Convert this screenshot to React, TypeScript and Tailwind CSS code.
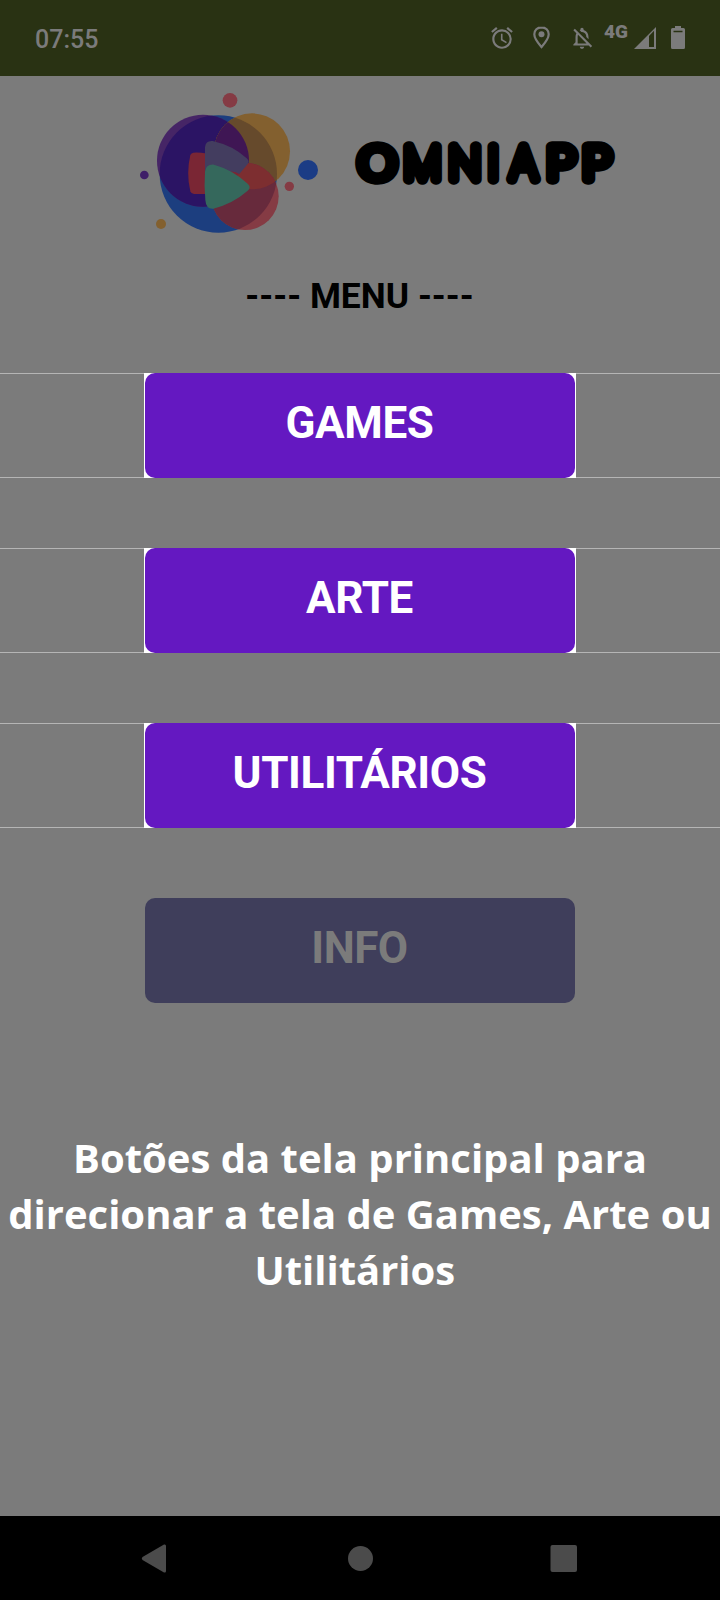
import { MdAccessAlarm, MdOutlineNotificationsOff } from "react-icons/md";

function StatusBar() {
  return (
    <header className="flex h-[76px] shrink-0 items-start bg-[#293213] pl-[35px] text-[#7b7b7b]">
      <span className="mt-[25px] text-[25px] leading-[30px] font-medium">07:55</span>
      <div className="ml-auto flex pr-[35px]">
        <MdAccessAlarm className="mt-[25px] size-[26px]" />
        <svg className="mt-[26px] ml-[18px] h-[23px] w-[17px]" viewBox="0 0 17 23">
          <path
            d="M8.500 1.300C4.300 1.300 1.300 4.300 1.300 8.300C1.300 13 5.500 17.600 8.500 21C11.500 17.600 15.700 13 15.700 8.300C15.700 4.300 12.700 1.300 8.500 1.300Z"
            fill="none"
            stroke="currentColor"
            strokeWidth="2.200"
          />
          <circle cx="8.500" cy="8.200" r="3" fill="currentColor" />
        </svg>
        <MdOutlineNotificationsOff className="mt-[25px] ml-[19px] size-[26px]" />
        <span className="mt-[21px] ml-[9px] w-[25px] text-[19px] leading-[22px] font-black">4G</span>
        <svg className="mt-[27px] ml-[5px] h-[22px] w-[22px]" viewBox="0 0 22 22">
          <path d="M0 22 22 0V22ZM15 9V20H20V3.8Z" fill="currentColor" fillRule="evenodd" />
        </svg>
        <svg className="mt-[26px] ml-[15px] h-[23px] w-[14px]" viewBox="0 0 14 23">
          <path d="M4 0H10V2H12.5Q14 2 14 3.500V21.500Q14 23 12.500 23H1.500Q0 23 0 21.500V3.500Q0 2 1.500 2H4ZM2.500 4.800V6.200H11.500V4.800Z" fill="currentColor" fillRule="evenodd" />
        </svg>
      </div>
    </header>
  );
}

function Logo() {
  return (
    <svg className="h-[170px] w-[200px]" viewBox="0 0 600 510">
      <defs>
        <clipPath id="blue"><circle cx="265" cy="282" r="176" /></clipPath>
        <clipPath id="purple"><circle cx="219" cy="242" r="138" /></clipPath>
        <clipPath id="orange"><circle cx="366" cy="214" r="114" /></clipPath>
      </defs>
      <circle cx="300" cy="61" r="22" fill="#853b44" />
      <circle cx="534" cy="270" r="30" fill="#1b3c85" />
      <circle cx="478" cy="319" r="14" fill="#853b44" />
      <circle cx="43" cy="285" r="13" fill="#3f1f68" />
      <circle cx="93" cy="432" r="15" fill="#83602f" />
      <circle cx="265" cy="282" r="176" fill="#1c3e7f" />
      <circle cx="219" cy="242" r="138" fill="#462566" />
      <circle cx="219" cy="242" r="138" fill="#2b1464" clipPath="url(#blue)" />
      <circle cx="366" cy="214" r="114" fill="#83602f" />
      <circle cx="366" cy="214" r="114" fill="#664a2c" clipPath="url(#blue)" />
      <circle cx="366" cy="214" r="114" fill="#3f1654" clipPath="url(#purple)" />
      <circle cx="345" cy="349" r="101" fill="#853b44" />
      <circle cx="345" cy="349" r="101" fill="#672a3c" clipPath="url(#blue)" />
      <circle cx="345" cy="349" r="101" fill="#7d2e30" clipPath="url(#orange)" />
      <path d="M190 218Q225 216 260 230L330 280L260 342H192Q184 342 181 334Q168 280 181 225Q184 219 190 218Z" fill="#7a2634" />
      <path d="M225 202Q227 181 248 183Q310 197 350 235Q362 245 350 256L328 282Q300 260 248 300Q227 315 225 292Z" fill="#433d5f" />
      <path d="M225 275Q228 252 252 254Q310 270 353 311Q365 322 353 332Q310 370 250 386Q228 388 226 360Q222 315 225 275Z" fill="#35685c" />
    </svg>
  );
}

function Wordmark() {
  return (
    <svg className="mt-[40px] ml-[10px] h-[90px] w-[290px]" viewBox="0 0 290 90">
      <g
        fontFamily="Inter"
        fontSize="44"
        fontWeight="100"
        fill="#000"
        stroke="#000"
        strokeWidth="11.3"
        strokeLinejoin="round"
        strokeLinecap="round"
      >
        <text transform="translate(18 59) scale(1.18 1)">O</text>
        <text transform="translate(63.500 59) scale(0.96 1)" x="0 47 88 111">MNIA</text>
        <text transform="translate(206.500 59) scale(1.12 1)" x="0 32">PP</text>
      </g>
    </svg>
  );
}

function HighlightedButton({ label }: { label: string }) {
  return (
    <div className="flex h-[105px] justify-center border-y border-[#b5b5b5]">
      <div className="-my-px w-[432px] bg-white px-px">
        <button className="block h-[105px] w-full rounded-[10px] bg-[#6418c1] pr-[1px] pb-[6px] text-[44px] font-bold tracking-[-0.4px] text-white">
          {label}
        </button>
      </div>
    </div>
  );
}

export default function App() {
  return (
    <div className="flex h-[1600px] w-[720px] flex-col overflow-hidden bg-[#7b7b7b] font-['Roboto',sans-serif]">
      <StatusBar />
      <div className="mt-[4px] flex h-[170px] pl-[130px]">
        <Logo />
        <Wordmark />
      </div>
      <h1 className="mt-[25px] h-[42px] pr-[1px] text-center text-[35.4px] leading-[42px] font-bold text-black">---- MENU ----</h1>
      <nav className="mt-[56px] flex flex-col gap-[70px]">
        <HighlightedButton label="GAMES" />
        <HighlightedButton label="ARTE" />
        <HighlightedButton label="UTILITÁRIOS" />
        <button className="mx-auto block h-[105px] w-[430px] rounded-[10px] bg-[#3f3e5b] pr-[1px] pb-[6px] text-[44px] font-bold tracking-[-0.5px] text-[#7b7b7b]">
          INFO
        </button>
      </nav>
      <p className="mt-[127px] text-center font-['Open_Sans',sans-serif] text-[40px] leading-[56px] font-bold whitespace-nowrap text-white">
        Botões da tela principal para
        <br />
        direcionar a tela de Games, Arte ou
        <br />
        Utilitários&nbsp;
      </p>
      <footer className="mt-auto h-[84px] shrink-0 bg-black">
        <svg className="h-[84px] w-[720px]" viewBox="0 0 720 84" fill="#4b4b4b">
          <path d="M142.500 41Q141 42.500 142.500 44L164 56.500Q166 57 166 55V30Q166 28 164 28.500Z" />
          <circle cx="360.500" cy="42.500" r="12.500" />
          <rect x="550.500" y="29" width="26.500" height="27" rx="2" />
        </svg>
      </footer>
    </div>
  );
}
